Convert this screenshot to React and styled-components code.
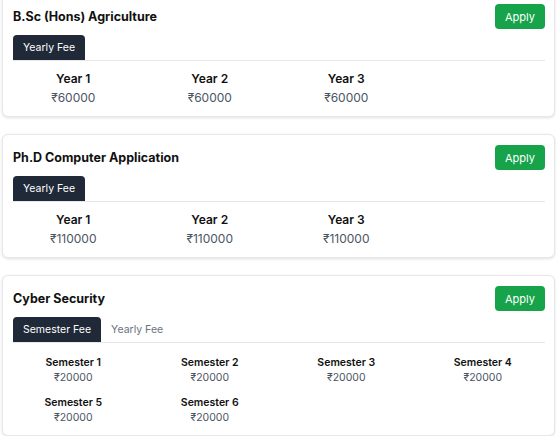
import React, { useState } from 'react'
import styled, { createGlobalStyle } from 'styled-components'

const GlobalStyle = createGlobalStyle`
  body {
    margin: 0;
    background: #ffffff;
    font-family: Inter, "Noto Sans", sans-serif;
    color: #111827;
  }
`

const Page = styled.div`
  display: flex;
  flex-direction: column;
  gap: 17px;
  margin-top: -7px;
  padding: 0 1px 0 2px;
`

const Card = styled.div`
  background: #fff;
  border: 1px solid #e5e7eb;
  border-radius: 6px;
  box-shadow: 0 1px 3px rgba(0, 0, 0, 0.12);
  padding: 10px 9px 11px 10px;
`

const Header = styled.div`
  display: flex;
  justify-content: space-between;
  align-items: center;
  margin-bottom: 6px;
`

const Title = styled.h3`
  margin: 0;
  font-size: 12.5px;
  font-weight: 700;
  color: #111;
`

const ApplyButton = styled.button`
  height: 25px;
  width: 50px;
  border: none;
  border-radius: 4px;
  background: #16a34a;
  color: #fff;
  font-family: inherit;
  font-size: 11px;
  cursor: pointer;
`

const TabBar = styled.div`
  display: flex;
  border-bottom: 1px solid #e5e7eb;
`

const Tab = styled.button`
  height: 25px;
  padding: 0 10px;
  border: none;
  border-radius: 4px 4px 0 0;
  background: ${p => (p.$active ? '#1f2937' : 'transparent')};
  color: ${p => (p.$active ? '#fff' : '#6b7280')};
  font-family: inherit;
  font-size: 10.5px;
  cursor: pointer;
`

const FeeGrid = styled.div`
  display: grid;
  grid-template-columns: repeat(4, 1fr);
  row-gap: ${p => (p.$small ? '12px' : '0')};
  margin: ${p => (p.$small ? '13px' : '10px')} -6px 0 -8px;
`

const FeeItem = styled.div`
  display: flex;
  flex-direction: column;
  align-items: center;
  gap: ${p => (p.$small ? '2px' : '4px')};
`

const FeeLabel = styled.div`
  font-size: ${p => (p.$small ? '10.5px' : '12px')};
  font-weight: 600;
  color: #111;
`

const FeeAmount = styled.div`
  font-size: ${p => (p.$small ? '10.5px' : '12px')};
  color: #4b5563;
`

const courses = [
  {
    name: 'B.Sc (Hons) Agriculture',
    tabs: [{ label: 'Yearly Fee', unit: 'Year', fees: [60000, 60000, 60000] }]
  },
  {
    name: 'Ph.D Computer Application',
    tabs: [{ label: 'Yearly Fee', unit: 'Year', fees: [110000, 110000, 110000] }]
  },
  {
    name: 'Cyber Security',
    tabs: [
      { label: 'Semester Fee', unit: 'Semester', fees: [20000, 20000, 20000, 20000, 20000, 20000], small: true },
      { label: 'Yearly Fee', unit: 'Year', fees: [60000, 60000, 60000] }
    ]
  }
]

const CourseCard = ({ course }) => {
  const [active, setActive] = useState(0)
  const tab = course.tabs[active]
  return (
    <Card>
      <Header>
        <Title>{course.name}</Title>
        <ApplyButton>Apply</ApplyButton>
      </Header>
      <TabBar>
        {course.tabs.map((t, i) => (
          <Tab key={t.label} $active={i === active} onClick={() => setActive(i)}>{t.label}</Tab>
        ))}
      </TabBar>
      <FeeGrid $small={tab.small}>
        {tab.fees.map((fee, i) => (
          <FeeItem key={i} $small={tab.small}>
            <FeeLabel $small={tab.small}>{tab.unit} {i + 1}</FeeLabel>
            <FeeAmount $small={tab.small}>₹{fee}</FeeAmount>
          </FeeItem>
        ))}
      </FeeGrid>
    </Card>
  )
}

const App = () => (
  <>
    <GlobalStyle />
    <Page>
      {courses.map(c => <CourseCard key={c.name} course={c} />)}
    </Page>
  </>
)

export default App
